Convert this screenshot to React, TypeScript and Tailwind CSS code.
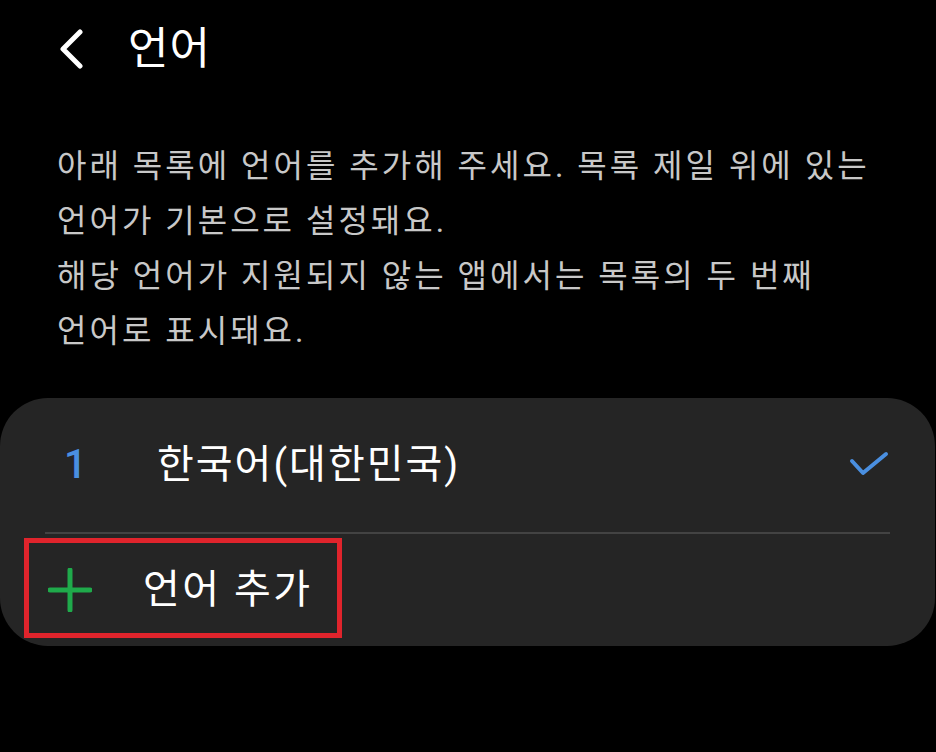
const FONT = "font-['Roboto','Noto_Sans_CJK_KR',sans-serif]";

function BackIcon() {
  return (
    <svg width="28" height="40" viewBox="0 0 28 40" fill="none">
      <path d="M22 3 L5 20 L22 37" stroke="#ffffff" strokeWidth="5" strokeLinecap="round" strokeLinejoin="round" />
    </svg>
  );
}

function CheckIcon() {
  return (
    <svg width="40" height="28" viewBox="0 0 40 28" fill="none">
      <path d="M3 10 L14 22 L37 3" stroke="#4a8fe0" strokeWidth="4" strokeLinecap="round" strokeLinejoin="round" />
    </svg>
  );
}

function PlusIcon() {
  return (
    <svg width="44" height="44" viewBox="0 0 44 44" fill="none">
      <path d="M22 2 V42 M2 22 H42" stroke="#1faa4b" strokeWidth="5" strokeLinecap="round" />
    </svg>
  );
}

const descLines = [
  "아래 목록에 언어를 추가해 주세요. 목록 제일 위에 있는",
  "언어가 기본으로 설정돼요.",
  "해당 언어가 지원되지 않는 앱에서는 목록의 두 번째",
  "언어로 표시돼요.",
];

export default function App() {
  return (
    <div className={`w-[936px] h-[752px] bg-black overflow-hidden ${FONT}`}>
      {/* header */}
      <div className="flex items-center h-[98px] pl-[58px]">
        <BackIcon />
        <span className="ml-[42px] text-[44px] tracking-[1px] text-white leading-none">언어</span>
      </div>

      {/* description */}
      <div className="mt-[41px] px-[57px] text-[32px] tracking-[3px] leading-[55px] text-[#c8c8c8]">
        {descLines.map((line) => (
          <div key={line} className="whitespace-nowrap">
            {line}
          </div>
        ))}
      </div>

      {/* language list card */}
      <div className="mt-[39px] mr-px rounded-[48px] bg-[#252525]">
        <div className="flex items-center h-[134px] pl-[64px] pr-[46px]">
          <span className="w-[93px] text-[40px] text-[#4a8fe0] font-medium">1</span>
          <span className="flex-1 text-[40px] tracking-[2px] text-white">한국어(대한민국)</span>
          <CheckIcon />
        </div>
        <div className="mx-[45px] h-[2px] bg-[#434343]" />
        <div className="relative flex items-center h-[112px] pl-[48px]">
          <PlusIcon />
          <span className="ml-[51px] text-[40px] tracking-[2.5px] text-white">언어 추가</span>
          <div className="absolute left-[24px] top-[4px] w-[318px] h-[100px] border-[5px] border-[#e0242c]" />
        </div>
      </div>
    </div>
  );
}
